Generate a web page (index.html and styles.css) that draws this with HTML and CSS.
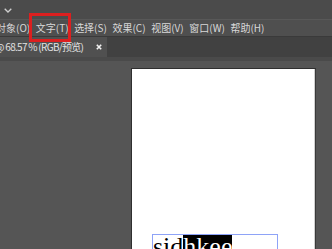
FILE: index.html
```html
<!DOCTYPE html>
<html lang="zh">
<head>
<meta charset="utf-8">
<link rel="stylesheet" href="styles.css">
</head>
<body>
<div class="app">
  <div class="titlebar">
    <svg class="chevron" width="8" height="5" viewBox="0 0 8 5"><polyline points="0.7,0.7 4,4 7.3,0.7" fill="none" stroke="#cfcfcf" stroke-width="1.3"/></svg>
  </div>
  <nav class="menubar">
    <span class="menu-item">对象(O)</span>
    <span class="menu-item">文字(T)</span>
    <span class="menu-item">选择(S)</span>
    <span class="menu-item">效果(C)</span>
    <span class="menu-item">视图(V)</span>
    <span class="menu-item">窗口(W)</span>
    <span class="menu-item">帮助(H)</span>
  </nav>
  <div class="red-mark"></div>
  <div class="tabbar">
    <div class="tab">
      <span class="tab-title">@ 68.57 % (RGB/预览)</span>
      <svg class="close" width="6" height="6" viewBox="0 0 6 6"><path d="M0.8 0.8 L5.2 5.2 M5.2 0.8 L0.8 5.2" stroke="#f2f2f2" stroke-width="1.6"/></svg>
    </div>
  </div>
  <div class="canvas">
    <div class="artboard">
      <div class="textframe"><span class="txt">sid</span><span class="txt sel">hkee</span></div>
    </div>
  </div>
</div>
</body>
</html>
```
FILE: styles.css
```css
html, body {
  margin: 0;
  padding: 0;
}
body {
  width: 332px;
  height: 249px;
  overflow: hidden;
  background: #555555;
  font-family: "Noto Sans CJK SC", "Noto Sans", sans-serif;
}
.app {
  position: relative;
  width: 332px;
  height: 249px;
  overflow: hidden;
  display: flex;
  flex-direction: column;
}
.titlebar {
  height: 19px;
  flex: none;
  background: #4b4b4b;
  border-bottom: 1px solid #585858;
  display: flex;
  align-items: center;
  padding-left: 4px;
}
.chevron {
  margin-top: 1px;
}
.menubar {
  height: 16px;
  flex: none;
  background: #4f4f4f;
  border-bottom: 1px solid #3a3a3a;
  display: flex;
  align-items: center;
  gap: 5.6px;
  font-size: 10px;
  line-height: 16px;
  color: #d8d8d8;
  white-space: nowrap;
}
.menu-item:first-child {
  margin-left: -4px;
}
.red-mark {
  position: absolute;
  left: 29px;
  top: 13px;
  width: 42px;
  height: 29px;
  box-sizing: border-box;
  border: 3px solid #dc1f1f;
}
.tabbar {
  height: 20px;
  flex: none;
  background: #414141;
  display: flex;
}
.tab {
  width: 107px;
  background: #505050;
  display: flex;
  align-items: center;
  overflow: hidden;
  white-space: nowrap;
}
.tab-title {
  font-size: 10px;
  letter-spacing: -0.7px;
  line-height: 20px;
  color: #e2e2e2;
  margin-left: -5px;
}
.close {
  margin-left: auto;
  margin-right: 5px;
  flex: none;
}
.canvas {
  flex: 1;
  background: #555555;
  border-top: 4px solid #4a4a4a;
  padding-top: 7px;
  padding-left: 131px;
}
.artboard {
  width: 163px;
  height: 220px;
  background: #ffffff;
  border: 1px solid #2f2f2f;
  border-right-color: #3a3a3a;
  box-shadow: inset -1px 0 0 #d0d0d0;
  padding-top: 165px;
  padding-left: 20px;
  box-sizing: content-box;
}
.textframe {
  width: 124px;
  height: 30px;
  border: 1px solid #8ea3f7;
  border-bottom: none;
  display: flex;
}
.txt {
  font-family: "Liberation Serif", serif;
  font-size: 26px;
  line-height: 23px;
  color: #000000;
}
.sel {
  background: #000000;
  color: #ffffff;
}
```
